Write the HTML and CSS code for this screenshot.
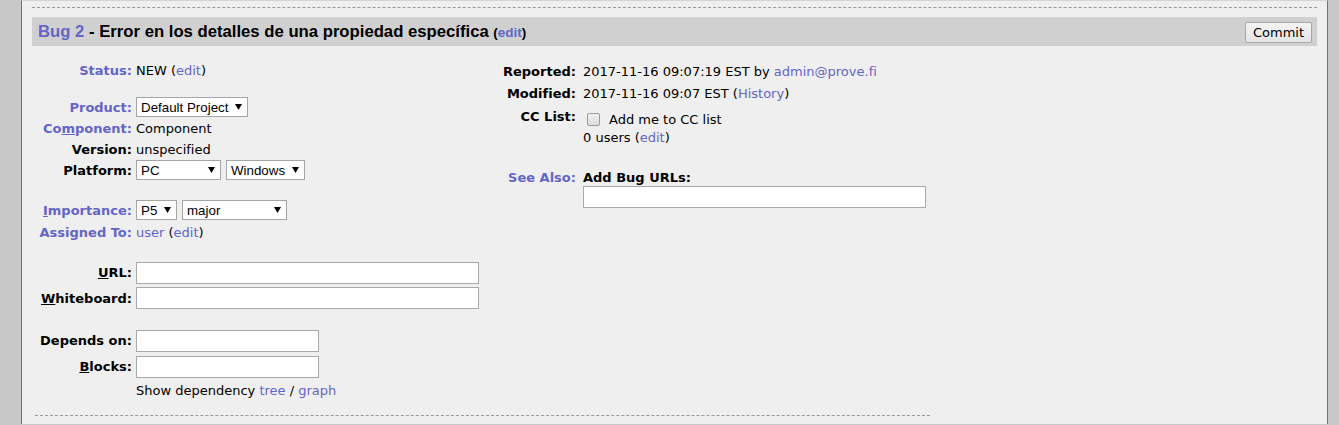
FILE: index.html
```html
<!DOCTYPE html>
<html lang="es">
<head>
<meta charset="utf-8">
<title>Bug 2</title>
<link rel="stylesheet" href="styles.css">
</head>
<body>
<div class="frame">
  <div class="bug">
    <div class="header">
      <div class="title"><a class="buglink" href="#">Bug 2</a> - Error en los detalles de una propiedad específica <span class="title-edit">(<a href="#">edit</a>)</span></div>
      <button class="commit" type="button">Commit</button>
    </div>

    <div class="fields">
      <div class="col-left">
        <div class="row h20"><span class="lbl link">Status:</span><span class="val">NEW (<a href="#">edit</a>)</span></div>
        <div class="spacer s16"></div>
        <div class="row h22"><span class="lbl link">Product:</span><span class="val"><span class="sel w112"><span>Default Project</span><svg class="arr" width="7" height="6" viewBox="0 0 7 6"><polygon points="0,0 7,0 3.5,6" fill="#000"/></svg></span></span></div>
        <div class="row h21"><span class="lbl link">Co<u>m</u>ponent:</span><span class="val">Component</span></div>
        <div class="row h20"><span class="lbl">Version:</span><span class="val">unspecified</span></div>
        <div class="row h22"><span class="lbl">Platform:</span><span class="val pair"><span class="sel w85"><span>PC</span><svg class="arr" width="7" height="6" viewBox="0 0 7 6"><polygon points="0,0 7,0 3.5,6" fill="#000"/></svg></span><span class="sel w79"><span>Windows</span><svg class="arr" width="7" height="6" viewBox="0 0 7 6"><polygon points="0,0 7,0 3.5,6" fill="#000"/></svg></span></span></div>
        <div class="spacer s18"></div>
        <div class="row h22"><span class="lbl link"><u>I</u>mportance:</span><span class="val pair"><span class="sel w41"><span>P5</span><svg class="arr" width="7" height="6" viewBox="0 0 7 6"><polygon points="0,0 7,0 3.5,6" fill="#000"/></svg></span><span class="sel w105"><span>major</span><svg class="arr" width="7" height="6" viewBox="0 0 7 6"><polygon points="0,0 7,0 3.5,6" fill="#000"/></svg></span></span></div>
        <div class="row h22"><span class="lbl link">Assigned To:</span><span class="val"><a href="#">user</a> (<a href="#">edit</a>)</span></div>
        <div class="spacer s17"></div>
        <div class="row h25"><span class="lbl"><u>U</u>RL:</span><span class="val"><span class="input w343"></span></span></div>
        <div class="row h26"><span class="lbl"><u>W</u>hiteboard:</span><span class="val"><span class="input w343"></span></span></div>
        <div class="spacer s17"></div>
        <div class="row h26"><span class="lbl up">Depends on:</span><span class="val"><span class="input w183"></span></span></div>
        <div class="row h26"><span class="lbl up"><u>B</u>locks:</span><span class="val"><span class="input w183"></span></span></div>
        <div class="row h20"><span class="lbl"></span><span class="val">Show dependency <a href="#">tree</a> / <a href="#">graph</a></span></div>
      </div>

      <div class="col-right">
        <div class="row h22"><span class="lbl">Reported:</span><span class="val">2017-11-16 09:07:19 EST by <a href="#">admin@prove.fi</a></span></div>
        <div class="row h22"><span class="lbl">Modified:</span><span class="val">2017-11-16 09:07 EST (<a href="#">History</a>)</span></div>
        <div class="row top cc"><span class="lbl">CC List:</span><span class="val">
          <span class="ccline"><span class="check"></span>Add me to CC list</span>
          <span class="ccusers">0 users (<a href="#">edit</a>)</span>
        </span></div>
        <div class="row top seealso"><span class="lbl link">See Also:</span><span class="val">
          <span class="addurls">Add Bug URLs:</span>
          <span class="input w343"></span>
        </span></div>
      </div>
    </div>

    <div class="bottom-line"></div>
  </div>
</div>
</body>
</html>
```

FILE: styles.css
```css
html, body {
  margin: 0;
  padding: 0;
}
body {
  background: #c8c8c8;
  font-family: "DejaVu Sans", Verdana, sans-serif;
  font-size: 13px;
  color: #000;
  height: 425px;
  overflow: hidden;
}
a {
  color: #6465c6;
  text-decoration: none;
}
.frame {
  margin-left: 21px;
  width: 1307px;
  height: 424px;
  background: #efefef;
  border-left: 1px solid #6c7285;
  border-right: 1px solid #6c7285;
  border-top: 1px solid #d4d4d4;
  padding: 6px 10px 0 10px;
  box-sizing: border-box;
}
.bug {
  border-top: 1px dashed #9a9a9a;
}
.header {
  margin-top: 9px;
  height: 29px;
  background: #d0d0d0;
  display: flex;
  align-items: center;
  justify-content: space-between;
  padding: 0 5px 0 6px;
}
.title {
  font-family: "Liberation Sans", Arial, sans-serif;
  font-weight: bold;
  font-size: 16.7px;
  color: #000;
  padding-top: 1px;
}
.title-edit {
  font-size: 13.5px;
}
.commit {
  font-family: "DejaVu Sans", Verdana, sans-serif;
  font-size: 13px;
  height: 21px;
  width: 67px;
  padding: 0;
  background: linear-gradient(#f4f4f4, #e4e4e4);
  border: 1px solid #a8a8a8;
  border-radius: 2px;
  color: #000;
  margin-top: 1px;
}
.fields {
  display: flex;
  margin-top: 14px;
}
.col-left {
  width: 460px;
  display: flex;
  flex-direction: column;
}
.col-right {
  display: flex;
  flex-direction: column;
}
.row {
  display: grid;
  align-items: center;
}
.col-left .row {
  grid-template-columns: 100px auto;
  column-gap: 4px;
}
.col-right .row {
  grid-template-columns: 84px auto;
  column-gap: 7px;
}
.row.top {
  align-items: start;
}
.lbl {
  font-weight: bold;
  text-align: right;
  white-space: nowrap;
}
.lbl.link {
  color: #6465c6;
}
.lbl.up {
  margin-top: -2px;
}
.val {
  white-space: nowrap;
}
.h20 { height: 20px; }
.h21 { height: 21px; }
.h22 { height: 22px; }
.h25 { height: 25px; }
.h26 { height: 26px; }
.spacer.s16 { height: 16px; }
.spacer.s17 { height: 17px; }
.spacer.s18 { height: 18px; }

.pair {
  display: flex;
  gap: 5px;
}
.sel {
  display: inline-flex;
  align-items: center;
  justify-content: space-between;
  box-sizing: border-box;
  height: 20px;
  border: 1px solid #a6a6a6;
  background: #fff;
  padding: 0 5px 0 4px;
  font-family: "Liberation Sans", Arial, sans-serif;
  font-size: 13.33px;
  vertical-align: middle;
}
.sel .arr {
  flex: none;
}
.w112 { width: 112px; }
.w85 { width: 85px; }
.w79 { width: 79px; }
.w41 { width: 41px; }
.w105 { width: 105px; }

.input {
  display: block;
  box-sizing: border-box;
  height: 22px;
  border: 1px solid #a9a9a9;
  background: #fff;
}
.w343 { width: 343px; }
.w183 { width: 183px; }

.cc {
  margin-top: 5px;
}
.cc .val {
  display: flex;
  flex-direction: column;
}
.ccline {
  display: flex;
  align-items: center;
  height: 20px;
}
.check {
  width: 13px;
  height: 13px;
  box-sizing: border-box;
  border: 1px solid #9b9b9b;
  border-radius: 2px;
  background: linear-gradient(#f0f0f0, #dcdcdc);
  margin: 0 9px 0 4px;
}
.ccusers {
  line-height: 17px;
}
.seealso {
  margin-top: 24px;
}
.seealso .val {
  display: flex;
  flex-direction: column;
}
.addurls {
  font-weight: bold;
  line-height: 16px;
}
.bottom-line {
  margin: 15px 0 0 3px;
  width: 895px;
  border-top: 1px dashed #9a9a9a;
}
```
